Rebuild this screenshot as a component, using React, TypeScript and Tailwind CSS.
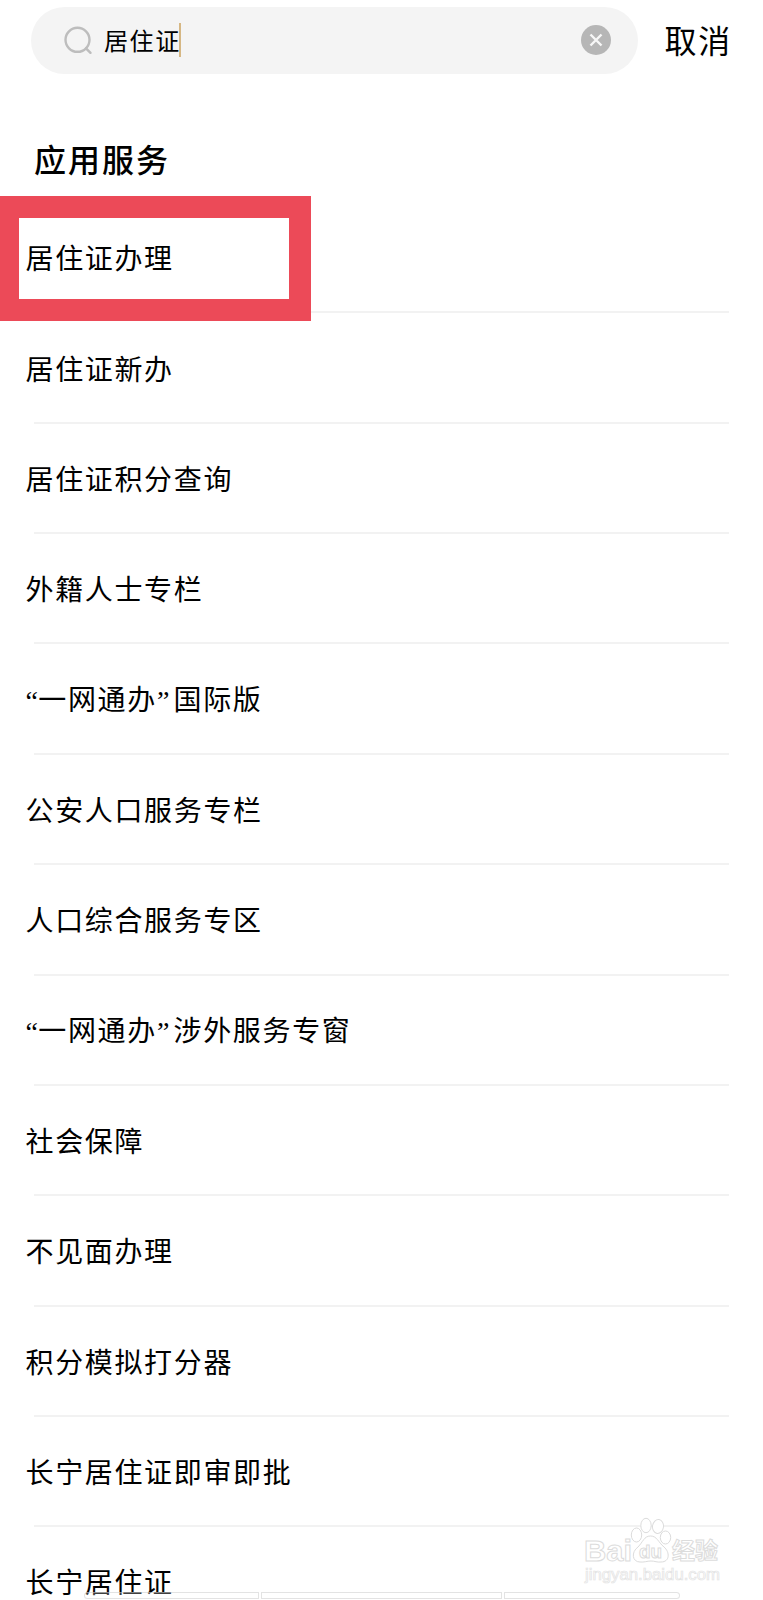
import { ChangeEvent, useState } from "react";

const services = [
    "居住证办理",
    "居住证新办",
    "居住证积分查询",
    "外籍人士专栏",
    "“一网通办”国际版",
    "公安人口服务专栏",
    "人口综合服务专区",
    "“一网通办”涉外服务专窗",
    "社会保障",
    "不见面办理",
    "积分模拟打分器",
    "长宁居住证即审即批",
    "长宁居住证",
];

const SearchBar = () => {
    const [keyword, setKeyword] = useState("居住证");

    const handleChange = (e: ChangeEvent<HTMLInputElement>) => {
        setKeyword(e.target.value);
    };

    return (
        <header className="flex items-center pt-[6.500px] pl-[31px]">
            <div className="flex h-[67.500px] w-[607px] items-center rounded-full bg-[#f4f4f4] pl-8 pr-[27px]">
                <svg className="h-8 w-8 shrink-0" viewBox="0 0 32 32" fill="none" stroke="#bdbdbd" strokeWidth="2.4">
                    <circle cx="14.5" cy="15.8" r="12" />
                    <path d="M23 24.300l4.500 4.500" strokeLinecap="round" />
                </svg>
                <div className="ml-[9px] flex flex-1 items-center">
                    <input
                        value={keyword}
                        onChange={handleChange}
                        className="w-[76px] bg-transparent pt-[2px] text-[24px] leading-9 tracking-[1.6px] text-black outline-none"
                    />
                    <span className="-ml-[1px] h-[34px] w-[2px] bg-[#d6b783]" />
                </div>
                <button type="button" onClick={() => setKeyword("")}>
                    <svg className="h-[30px] w-[30px]" viewBox="0 0 30 30">
                        <circle cx="15" cy="15" r="15" fill="#b6b6b6" />
                        <path d="M9.500 9.500l11 11M20.500 9.500l-11 11" stroke="#f7f7f7" strokeWidth="2.4" />
                    </svg>
                </button>
            </div>
            <button type="button" className="ml-[26.500px] pt-[2px] text-[32px] leading-10 tracking-[1.8px] text-black">
                取消
            </button>
        </header>
    );
};

// quotes are narrower than a full character cell, so they are spaced by hand
const ServiceName = ({ name }: { name: string }) => (
    <span>
        {name.split(/([“”])/).map((part, index) => {
            if (part === "“") return <span key={index} className="-mr-[1.3px] font-['Liberation_Serif',serif]">“</span>;
            if (part === "”") return <span key={index} className="mr-[2.600px] font-['Liberation_Serif',serif]">”</span>;
            return part;
        })}
    </span>
);

const Watermark = () => (
    <svg className="absolute left-[580px] top-[1512px] h-[76px] w-[150px]" viewBox="0 0 150 76" fill="#ffffff" stroke="#dcdcdc">
        <text x="4" y="48.5" fontSize="30" fontWeight="700" textLength="48" lengthAdjust="spacingAndGlyphs" fontFamily="Liberation Sans, sans-serif">
            Bai
        </text>
        <ellipse cx="56.5" cy="23" rx="5.2" ry="7" />
        <ellipse cx="66" cy="13.5" rx="5.2" ry="7.2" />
        <ellipse cx="78" cy="14.5" rx="5.5" ry="7" transform="rotate(8 78 14.5)" />
        <ellipse cx="85.5" cy="25.5" rx="5.2" ry="6.5" />
        <path d="M70.5 24C64 24 63 30 58 35C51 40 52 50 60 50C64 50.500 67 49 71 49C75 49 77 50.500 81 50C90 50 90 40 84 35C78 30 77 24 70.500 24Z" />
        <text x="59" y="46" fontSize="19" fontWeight="700" textLength="23" lengthAdjust="spacingAndGlyphs" fontFamily="Liberation Sans, sans-serif">
            du
        </text>
        <text x="92" y="47" fontSize="23" fontWeight="700" fontFamily="Noto Sans CJK SC, sans-serif">
            经验
        </text>
        <text x="5" y="67.5" fontSize="16" strokeWidth="0.7" stroke="#e3e3e3" textLength="135" lengthAdjust="spacingAndGlyphs" fontFamily="Liberation Sans, sans-serif">
            jingyan.baidu.com
        </text>
    </svg>
);

const App = () => {
    return (
        <div className="relative h-[1600px] w-[763px] overflow-hidden bg-white font-['Noto_Sans','Noto_Sans_CJK_SC',sans-serif]" lang="zh-CN">
            <SearchBar />
            <h1 className="mt-[62px] pl-[34px] text-[32px] font-medium leading-[48px] tracking-[2px] text-black">应用服务</h1>

            <ul className="mt-[19px]">
                {services.map((name) => (
                    <li key={name} className="flex h-[110.36px] flex-col">
                        <div className="flex flex-1 items-center pt-[2px] pl-[25.500px] text-[28px] leading-10 tracking-[1.65px] text-black">
                            <ServiceName name={name} />
                        </div>
                        <div className="ml-[34px] mr-[34px] h-[2px] shrink-0 bg-[#f2f2f2]" />
                    </li>
                ))}
            </ul>

            {/* highlight around the first service */}
            <div className="absolute left-0 top-[196px] h-[125px] w-[311px] border-y-[22px] border-l-[19px] border-r-[22px] border-[#ec4a58]" />

            {/* progress segments cut by the bottom edge */}
            <div className="absolute left-[84px] top-[1592px] flex gap-[2px]">
                <span className="h-[7px] w-[175px] rounded-l-full border border-[#c8c8c8]/50 bg-white/25" />
                <span className="h-[7px] w-[241px] border border-[#c8c8c8]/50 bg-white/25" />
                <span className="h-[7px] w-[176px] rounded-r-full border border-[#c8c8c8]/50 bg-white/25" />
            </div>
            <Watermark />
        </div>
    );
};
export default App;
